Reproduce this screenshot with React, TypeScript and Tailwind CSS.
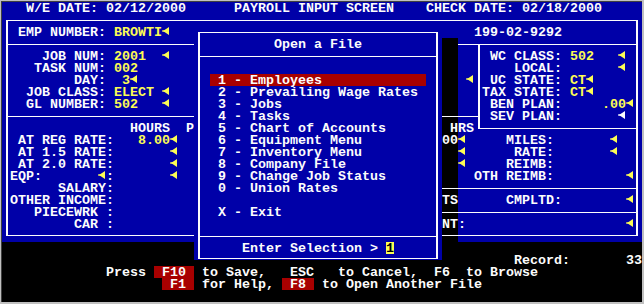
import clsx from "clsx";

// one text cell = 8 x 12 px, 80 x 25 screen
type Seg = [number, string, string?];

const W = "text-[#fcfcfc]";
const Y = "text-[#fcfc54]";
const R = "bg-[#a80000] text-[#fcfcfc]";

const mainRows: Seg[][] = [
  [[3, "W/E DATE: 02/12/2000"], [29, "PAYROLL INPUT SCREEN"], [53, "CHECK DATE: 02/18/2000"]],
  [],
  [[2, "EMP NUMBER:"], [14, "BROWTI", Y], [20, "◄", Y], [59, "199-02-9292"]],
  [],
  [[5, "JOB NUM:"], [14, "2001", Y], [20, "◄", Y], [61, "WC CLASS:"], [71, "502", Y], [77, "◄", Y]],
  [[4, "TASK NUM:"], [14, "002", Y], [64, "LOCAL:"], [77, "◄", Y]],
  [[9, "DAY:"], [15, "3", Y], [16, "◄", Y], [58, "◄", Y], [61, "UC STATE:"], [71, "CT", Y], [73, "◄", Y]],
  [[3, "JOB CLASS:"], [14, "ELECT", Y], [20, "◄", Y], [60, "TAX STATE:"], [71, "CT", Y], [73, "◄", Y]],
  [[3, "GL NUMBER:"], [14, "502", Y], [20, "◄", Y], [61, "BEN PLAN:"], [75, ".00", Y], [78, "◄", Y]],
  [[61, "SEV PLAN:"], [77, "◄"]],
  [[16, "HOURS"], [23, "P"], [56, "H"], [57, "RS"]],
  [[2, "AT REG RATE:"], [17, "8.00", Y], [21, "◄", Y], [55, "00"], [57, "◄", Y], [63, "MILES:"], [76, "◄", Y]],
  [[2, "AT 1.5 RATE:"], [21, "◄", Y], [57, "◄", Y], [64, "RATE:"], [76, "◄", Y]],
  [[2, "AT 2.0 RATE:"], [21, "◄", Y], [57, "◄", Y], [63, "REIMB:"]],
  [[1, "EQP:"], [12, "◄", Y], [13, ":"], [21, "◄", Y], [59, "OTH REIMB:"], [78, "◄", Y]],
  [[7, "SALARY:"]],
  [[1, "OTHER INCOME:"], [55, "TS"], [63, "CMPLTD:"], [78, "◄", Y]],
  [[4, "PIECEWRK :"]],
  [[9, "CAR :"], [55, "NT"], [57, ":"], [78, "◄", Y]],
  [],
  [],
  [[64, "Record:"], [78, "33"]],
  [[13, "Press"], [19, " F10 ", R], [25, "to Save,"], [36, "ESC"], [42, "to Cancel,"], [54, "F6"], [58, "to Browse"]],
  [[20, " F1 ", R], [25, "for Help,"], [35, " F8 ", R], [40, "to Open Another File"]],
  [],
];

const menu = [
  "2 - Prevailing Wage Rates",
  "3 - Jobs",
  "4 - Tasks",
  "5 - Chart of Accounts",
  "6 - Equipment Menu",
  "7 - Inventory Menu",
  "8 - Company File",
  "9 - Change Job Status",
  "0 - Union Rates",
];

const dialogRows: Seg[][] = [
  [],
  [],
  [],
  [[34, "Open a File"]],
  [],
  [],
  [[26, " 1 - Employees".padEnd(27), R]],
  ...menu.map((m): Seg[] => [[27, m]]),
  [],
  [[27, "X - Exit"]],
  [],
  [],
  [[30, "Enter Selection >"], [48, "1", "bg-[#fcfc54] text-black"]],
];

function Arrow({ className }: { className?: string }) {
  return (
    <span className={clsx("flex h-[12px] w-[8px]", className)}>
      <svg width="8" height="12" viewBox="0 0 8 12">
        <polygon points="0,4.5 2.5,4 7,1 7,9 2.5,6 0,5.5" fill="currentColor" />
      </svg>
    </span>
  );
}

function Line({ segs }: { segs: Seg[] }) {
  let col = 0;
  const out: React.ReactNode[] = [];
  segs.forEach(([c, t, k = W], i) => {
    if (c > col) out.push(<span key={"s" + i}>{" ".repeat(c - col)}</span>);
    out.push(
      t === "◄" ? (
        <Arrow key={i} className={k} />
      ) : (
        <span key={i} className={clsx("pt-px", k)}>
          {t}
        </span>
      )
    );
    col = c + t.length;
  });
  return <div className="flex h-[12px] whitespace-pre">{out}</div>;
}

export default function App() {
  return (
    <div className="h-[304px] w-[644px] bg-[#c0c0c0] pl-px pt-px">
      <div className="w-fit border-l border-t border-[#404040]">
        <div className="grid h-[300px] w-[640px] grid-cols-[repeat(80,8px)] grid-rows-[repeat(25,12px)] bg-black font-['Liberation_Mono',monospace] text-[13.33px] font-bold leading-[12px] text-[#fcfcfc]">
          {/* blue data area */}
          <div className="col-start-[1] col-end-[81] row-start-[1] row-end-[21] bg-[#0000a8]" />
          {/* shadow right of the dialog */}
          <div className="col-start-[56] col-end-[58] row-start-[4] row-end-[21] bg-black" />

          {/* outer frame */}
          <div className="col-start-[1] col-end-[81] row-start-[2] row-end-[21] mx-[4px] mb-[6px] mt-[6px] border-x-2 border-y border-[#fcfcfc]" />
          {/* right panel box */}
          <div className="col-start-[60] col-end-[81] row-start-[4] row-end-[12] mb-[5px] ml-[4px] mr-[4px] mt-[6px] border-b border-l-2 border-[#fcfcfc]" />
          {/* dividers */}
          <div className="col-start-[1] col-end-[25] row-start-[4] ml-[4px] mt-[6px] h-px self-start bg-[#fcfcfc]" />
          <div className="col-start-[58] col-end-[81] row-start-[4] mr-[4px] mt-[6px] h-px self-start bg-[#fcfcfc]" />
          <div className="col-start-[1] col-end-[61] row-start-[10] ml-[4px] mr-[4px] mt-[6px] h-px self-start bg-[#fcfcfc]" />
          <div className="col-start-[56] col-end-[81] row-start-[16] mr-[4px] mt-[6px] h-px self-start bg-[#fcfcfc]" />
          <div className="col-start-[56] col-end-[81] row-start-[18] mr-[4px] mt-[6px] h-px self-start bg-[#fcfcfc]" />

          {/* screen text */}
          <div className="col-start-[1] col-end-[81] row-start-[1] row-end-[26] flex flex-col">
            {mainRows.map((r, i) => (
              <Line key={i} segs={r} />
            ))}
          </div>

          {/* Open a File dialog */}
          <div className="col-start-[25] col-end-[56] row-start-[3] row-end-[23] mb-[6px] bg-[#0000a8]" />
          <div className="col-start-[25] col-end-[56] row-start-[3] row-end-[23] mx-[4px] mb-[7px] mt-[6px] border-x-2 border-y border-[#fcfcfc]" />
          <div className="col-start-[25] col-end-[56] row-start-[5] mx-[4px] mt-[6px] h-px self-start bg-[#fcfcfc]" />
          <div className="col-start-[25] col-end-[56] row-start-[20] mx-[4px] mt-[6px] h-px self-start bg-[#fcfcfc]" />
          <div className="col-start-[1] col-end-[81] row-start-[1] row-end-[26] flex flex-col">
            {dialogRows.map((r, i) => (
              <Line key={i} segs={r} />
            ))}
          </div>
        </div>
      </div>
    </div>
  );
}
